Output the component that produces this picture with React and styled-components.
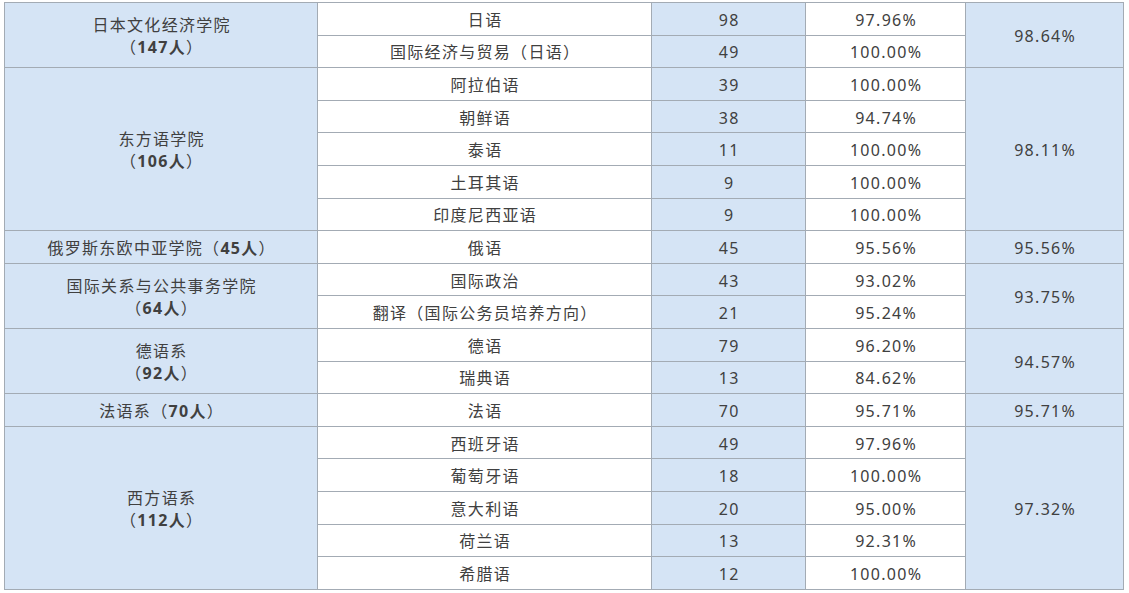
import React from 'react'
import styled, { createGlobalStyle } from 'styled-components'

const GlobalStyle = createGlobalStyle`
  html, body {
    margin: 0;
    padding: 0;
    background: #ffffff;
  }
  body {
    font-family: "Noto Sans", "Noto Sans CJK SC", sans-serif;
    color: #404040;
  }
`

const widths = [313, 334, 154, 160, 158]

const data = [
  { college: '日本文化经济学院', count: '147人', wrap: true, total: '98.64%', majors: [
    ['日语', '98', '97.96%'],
    ['国际经济与贸易（日语）', '49', '100.00%'],
  ] },
  { college: '东方语学院', count: '106人', wrap: true, total: '98.11%', majors: [
    ['阿拉伯语', '39', '100.00%'],
    ['朝鲜语', '38', '94.74%'],
    ['泰语', '11', '100.00%'],
    ['土耳其语', '9', '100.00%'],
    ['印度尼西亚语', '9', '100.00%'],
  ] },
  { college: '俄罗斯东欧中亚学院', count: '45人', wrap: false, total: '95.56%', majors: [
    ['俄语', '45', '95.56%'],
  ] },
  { college: '国际关系与公共事务学院', count: '64人', wrap: true, total: '93.75%', majors: [
    ['国际政治', '43', '93.02%'],
    ['翻译（国际公务员培养方向）', '21', '95.24%'],
  ] },
  { college: '德语系', count: '92人', wrap: true, total: '94.57%', majors: [
    ['德语', '79', '96.20%'],
    ['瑞典语', '13', '84.62%'],
  ] },
  { college: '法语系', count: '70人', wrap: false, total: '95.71%', majors: [
    ['法语', '70', '95.71%'],
  ] },
  { college: '西方语系', count: '112人', wrap: true, total: '97.32%', majors: [
    ['西班牙语', '49', '97.96%'],
    ['葡萄牙语', '18', '100.00%'],
    ['意大利语', '20', '95.00%'],
    ['荷兰语', '13', '92.31%'],
    ['希腊语', '12', '100.00%'],
  ] },
]

const App = () => {
  return (
    <>
      <GlobalStyle />
      <Page>
        <Table>
          <colgroup>
            {widths.map((w, i) => <Col key={i} $w={w} />)}
          </colgroup>
          <tbody>
            {data.map((g) =>
              g.majors.map((m, i) => (
                <Row key={g.college + m[0]}>
                  {i === 0 && (
                    <Cell $blue rowSpan={g.majors.length}>
                      {g.college}
                      {g.wrap && <br />}
                      （<Bold>{g.count}</Bold>）
                    </Cell>
                  )}
                  <Cell>{m[0]}</Cell>
                  <Cell $blue>{m[1]}</Cell>
                  <Cell>{m[2]}</Cell>
                  {i === 0 && (
                    <Cell $blue rowSpan={g.majors.length}>{g.total}</Cell>
                  )}
                </Row>
              ))
            )}
          </tbody>
        </Table>
      </Page>
    </>
  )
}

const Page = styled.div`
  padding: 2px 5px 0 4px;
`

const Table = styled.table`
  width: 1120px;
  border-collapse: collapse;
  table-layout: fixed;
`

const Col = styled.col`
  width: ${props => props.$w}px;
`

const Row = styled.tr`
  height: 32.6px;
`

const Cell = styled.td`
  border: 1px solid #a3abb4;
  background: ${props => props.$blue ? '#d5e4f5' : '#ffffff'};
  text-align: center;
  vertical-align: middle;
  font-size: 16px;
  line-height: 22px;
  letter-spacing: 1.3px;
  padding: 2px 0 0 1.3px;
  color: #404040;
`

const Bold = styled.span`
  font-weight: bold;
`

export default App
